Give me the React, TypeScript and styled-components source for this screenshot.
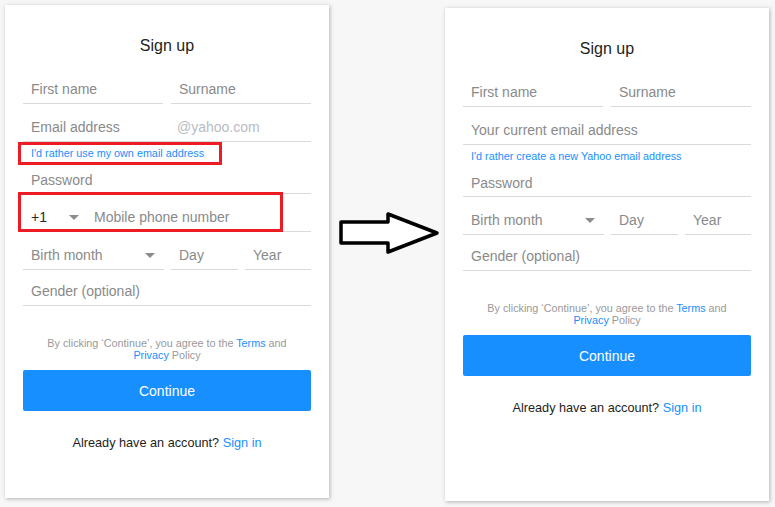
import styled, { createGlobalStyle } from 'styled-components';

const GlobalStyle = createGlobalStyle`
  html, body {
    margin: 0;
    padding: 0;
    background: #f7f7f7;
  }
  body {
    font-family: "Liberation Sans", Arial, sans-serif;
  }
`;

const BLUE = '#188fff';

const Page = styled.div`
  display: flex;
  align-items: flex-start;
  padding: 5px 0 0 5px;
  width: 775px;
  height: 507px;
  box-sizing: border-box;
`;

const Card = styled.div<{ offset?: number }>`
  position: relative;
  width: 324px;
  height: 493px;
  margin-top: ${({ offset }) => offset ?? 0}px;
  padding: 31px 18px 0;
  box-sizing: border-box;
  background: #fff;
  box-shadow: 1px 1px 4px rgba(0, 0, 0, 0.28);
  display: flex;
  flex-direction: column;
`;

const Title = styled.h1`
  margin: 0 0 10px;
  font-size: 16px;
  line-height: 20px;
  font-weight: 400;
  color: #1d1e20;
  text-align: center;
`;

const Row = styled.div<{ columns: string; gap: number }>`
  display: grid;
  grid-template-columns: ${({ columns }) => columns};
  column-gap: ${({ gap }) => gap}px;
`;

const Field = styled.div<{ size?: 'normal' | 'short' | 'compact' }>`
  position: relative;
  height: ${({ size }) => (size === 'short' ? 30 : size === 'compact' ? 36 : 38)}px;
  padding: ${({ size }) => (size === 'short' ? 7 : size === 'compact' ? 12 : 14)}px 8px 0;
  box-sizing: border-box;
  border-bottom: 1px solid #dadada;
  font-size: 14px;
  line-height: 18px;
  color: #8a8a8a;
  white-space: nowrap;
  display: flex;
  align-items: flex-start;
`;

const Placeholder = styled.span``;

const Suffix = styled.span`
  position: absolute;
  left: 154px;
  color: #b8bcc2;
`;

const Value = styled.span`
  color: #26282a;
  width: 38px;
`;

const Caret = styled.span<{ right?: boolean }>`
  width: 0;
  height: 0;
  margin-top: 7px;
  border-left: 5px solid transparent;
  border-right: 5px solid transparent;
  border-top: 5px solid #8c8c8c;
  ${({ right }) => (right ? 'margin-left: auto; margin-right: 1px;' : 'margin-right: 15px;')}
`;

const LinkRow = styled.div`
  height: 22px;
  padding: 5px 8px 0;
  box-sizing: border-box;
  font-size: 10.8px;
  line-height: 13px;
  color: ${BLUE};
`;

const Terms = styled.p`
  margin: 31px 0 0;
  font-size: 10.8px;
  line-height: 12px;
  color: #999;
  text-align: center;
`;

const Link = styled.span`
  color: ${BLUE};
`;

const ContinueButton = styled.button`
  margin-top: 9px;
  height: 41px;
  width: 100%;
  border: none;
  border-radius: 2px;
  background: ${BLUE};
  color: #fff;
  font-family: inherit;
  font-size: 14px;
`;

const Already = styled.p`
  margin: 24px 0 0;
  font-size: 12.7px;
  line-height: 16px;
  color: #1d1e20;
  text-align: center;
`;

const Annotation = styled.div<{ top: number; left: number; w: number; h: number }>`
  position: absolute;
  top: ${({ top }) => top}px;
  left: ${({ left }) => left}px;
  width: ${({ w }) => w}px;
  height: ${({ h }) => h}px;
  border: 3px solid #ed1c24;
  box-sizing: border-box;
  pointer-events: none;
`;

const ArrowBox = styled.div`
  width: 116px;
  flex-shrink: 0;
  padding-top: 205px;
  display: flex;
`;

const Arrow = () => (
  <svg width="116" height="46" viewBox="0 0 116 46">
    <polygon
      points="12,12 59,12 59,4 108,23 59,42 59,33 12,33"
      fill="#fff"
      stroke="#000"
      strokeWidth="3.5"
      strokeLinejoin="round"
    />
  </svg>
);

const FormFooter = () => (
  <>
    <Terms>
      By clicking ‘Continue’, you agree to the <Link>Terms</Link> and
      <br />
      <Link>Privacy</Link> Policy
    </Terms>
    <ContinueButton>Continue</ContinueButton>
    <Already>
      Already have an account? <Link>Sign in</Link>
    </Already>
  </>
);

const BirthRow = () => (
  <Row columns="141px 67px 1fr" gap={7}>
    <Field>
      <Placeholder>Birth month</Placeholder>
      <Caret right />
    </Field>
    <Field>
      <Placeholder>Day</Placeholder>
    </Field>
    <Field>
      <Placeholder>Year</Placeholder>
    </Field>
  </Row>
);

const NameRow = () => (
  <Row columns="1fr 1fr" gap={8}>
    <Field>
      <Placeholder>First name</Placeholder>
    </Field>
    <Field>
      <Placeholder>Surname</Placeholder>
    </Field>
  </Row>
);

export default function App() {
  return (
    <>
      <GlobalStyle />
      <Page>
        <Card>
          <Title>Sign up</Title>
          <NameRow />
          <Field>
            <Placeholder>Email address</Placeholder>
            <Suffix>@yahoo.com</Suffix>
          </Field>
          <LinkRow>I'd rather use my own email address</LinkRow>
          <Field size="short">
            <Placeholder>Password</Placeholder>
          </Field>
          <Field>
            <Value>+1</Value>
            <Caret />
            <Placeholder>Mobile phone number</Placeholder>
          </Field>
          <BirthRow />
          <Field size="compact">
            <Placeholder>Gender (optional)</Placeholder>
          </Field>
          <FormFooter />
          <Annotation top={137} left={13} w={204} h={23} />
          <Annotation top={187} left={13} w={265} h={40} />
        </Card>

        <ArrowBox>
          <Arrow />
        </ArrowBox>

        <Card offset={3}>
          <Title>Sign up</Title>
          <NameRow />
          <Field>
            <Placeholder>Your current email address</Placeholder>
          </Field>
          <LinkRow>I'd rather create a new Yahoo email address</LinkRow>
          <Field size="short">
            <Placeholder>Password</Placeholder>
          </Field>
          <BirthRow />
          <Field size="compact">
            <Placeholder>Gender (optional)</Placeholder>
          </Field>
          <FormFooter />
        </Card>
      </Page>
    </>
  );
}
